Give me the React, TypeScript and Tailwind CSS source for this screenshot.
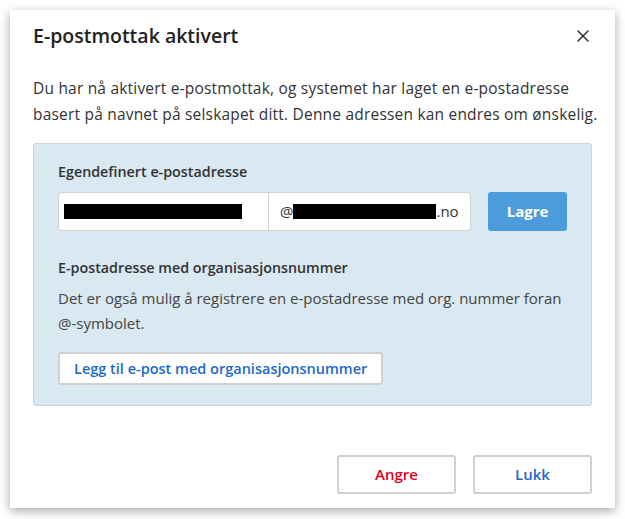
import React from "react";
import { X } from "lucide-react";

const Redacted: React.FC<{ className: string }> = ({ className }) => (
    <span className={`inline-block bg-black ${className}`} />
);

const App: React.FC = () => {
    return (
        <div className="min-h-screen bg-white p-[10px] font-['Open_Sans',sans-serif] text-[#333]">
            <div className="flex h-[498px] w-[605px] flex-col bg-white px-[23px] shadow-[0_3px_10px_rgba(0,0,0,0.35)]">
                {/* Header */}
                <div className="flex items-center justify-between pt-[14px]">
                    <h2 className="text-[19.5px] leading-[24px] font-semibold text-[#222]">E-postmottak aktivert</h2>
                    <button className="mr-[-1px] text-[#333]">
                        <X size={20} strokeWidth={1.8} />
                    </button>
                </div>

                <p className="mt-[27px] text-[15.5px] leading-[26px] tracking-[0.2px] whitespace-nowrap">
                    Du har nå aktivert e-postmottak, og systemet har laget en e-postadresse
                    <br />
                    basert på navnet på selskapet ditt. Denne adressen kan endres om ønskelig.
                </p>

                {/* Panel */}
                <div className="mt-[16px] rounded-[3px] border border-[#c9d5dd] bg-[#d9e8f1] px-[24px] pt-[18px] pb-[20px]">
                    <div className="text-[14.3px] leading-[20px] font-semibold text-[#333]">Egendefinert e-postadresse</div>
                    <div className="mt-[10px] flex items-center gap-[17px]">
                        <div className="flex h-[39px] w-[413px] rounded-[4px] border border-[#d3d3d3] bg-white">
                            <div className="flex w-[210px] items-center border-r border-[#d3d3d3] pl-[5px]">
                                <Redacted className="h-[15px] w-[178px]" />
                            </div>
                            <div className="flex flex-1 items-center pl-[11px] text-[15px]">
                                <span>@</span>
                                <Redacted className="h-[15px] w-[143px]" />
                                <span>.no</span>
                            </div>
                        </div>
                        <button className="h-[39px] w-[79px] rounded-[3px] bg-[#4c9bdb] text-[15px] font-bold text-white">
                            Lagre
                        </button>
                    </div>

                    <div className="mt-[27px] text-[14.3px] leading-[20px] font-semibold text-[#333]">
                        E-postadresse med organisasjonsnummer
                    </div>
                    <p className="mt-[8px] text-[15px] leading-[25px] text-[#444]">
                        Det er også mulig å registrere en e-postadresse med org. nummer foran
                        <br />
                        @-symbolet.
                    </p>
                    <button className="mt-[16px] h-[33px] rounded-[3px] border-2 border-[#d0d0d0] bg-white px-[14px] text-[14.5px] font-semibold text-[#1b6ac9]">
                        Legg til e-post med organisasjonsnummer
                    </button>
                </div>

                {/* Footer */}
                <div className="mt-auto flex justify-end gap-[17px] pb-[14px]">
                    <button className="h-[39px] w-[119px] rounded-[3px] border-2 border-[#d0d0d0] bg-white text-[15px] font-semibold text-[#e3001b]">
                        Angre
                    </button>
                    <button className="h-[39px] w-[119px] rounded-[3px] border-2 border-[#d0d0d0] bg-white text-[15px] font-semibold text-[#1b6ac9]">
                        Lukk
                    </button>
                </div>
            </div>
        </div>
    );
};

export default App;
